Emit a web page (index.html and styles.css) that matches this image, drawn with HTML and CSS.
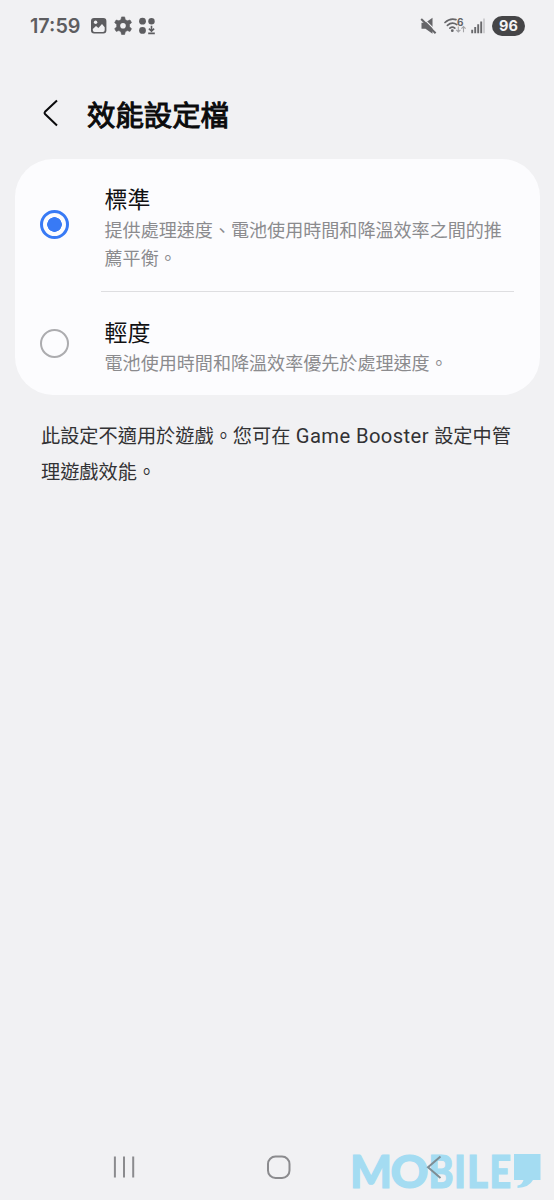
FILE: index.html
```html
<!DOCTYPE html>
<html lang="zh-Hant">
<head>
<meta charset="utf-8">
<title>效能設定檔</title>
<link rel="stylesheet" href="styles.css">
</head>
<body>
<div class="screen">
  <header class="status">
    <span class="clock">17:59</span>
    <svg class="status-left" width="66" height="20" viewBox="0 0 66 20">
      <rect x="1" y="2" width="15.4" height="15.6" rx="3" fill="#5d5d60"/>
      <path d="M2.800 12.900L6 9.900l2.400 2.200 3.600-4.200 2.700 3.300V14q0 1.900-1.800 1.900H4.600q-1.800 0-1.800-1.900z" fill="#f1f1f3"/>
      <circle cx="5.600" cy="6.300" r="1.700" fill="#f1f1f3"/>
      <path d="M31.600 1.600h3l.7 2.800 2 1.100 2.700-.8 1.500 2.600-2 2v2.200l2 2-1.500 2.600-2.700-.8-2 1.100-.7 2.800h-3l-.7-2.800-2-1.100-2.700.8-1.500-2.600 2-2V9.300l-2-2 1.500-2.600 2.700.8 2-1.100z" transform="translate(0 -.7)" fill="#5d5d60" stroke="#5d5d60" stroke-width=".6" stroke-linejoin="round"/>
      <circle cx="33" cy="9.700" r="2.800" fill="#f1f1f3"/>
      <g fill="#5d5d60"><circle cx="52.500" cy="5.200" r="3.400"/><circle cx="61.500" cy="5.200" r="3.200"/><circle cx="52.500" cy="14.400" r="3.400"/></g>
      <path d="M61.500 9.800v5.500M58.900 12.600l2.600 2.600 2.600-2.600M58.200 17.400h6.600" fill="none" stroke="#5d5d60" stroke-width="1.600"/>
    </svg>
    <svg class="status-right" width="66" height="20" viewBox="0 0 66 20">
      <path d="M1.500 6.800h4l7-5v16l-7-5h-4z" fill="#656568"/>
      <path d="M2.300 1.400L16.800 15.800" stroke="#f1f1f3" stroke-width="1.200"/>
      <path d="M1.200 3L15.600 17.200" stroke="#656568" stroke-width="2"/>
      <g fill="none" stroke="#656568" stroke-width="1.700" stroke-linecap="round"><path d="M25 6.500Q30 1.800 36 3.600M27.400 9.400Q32 5.400 36.800 8.600M29.900 12.200Q32.400 10.200 34.800 12.200"/></g>
      <circle cx="32.300" cy="14.700" r="1.400" fill="#656568"/>
      <text x="37" y="9.700" class="wifi-generation">6</text>
      <path d="M38.300 10.500v5.200M36.200 13.800l2.100 2.200 2.100-2.200M43.500 16.300v-5.600M41.400 12.700l2.100-2.200 2.100 2.200" fill="none" stroke="#a5a5a8" stroke-width="1.100"/>
      <path d="M52.200 13.700v3.500M55.200 11v6.200M58.200 8.300v8.900M61.200 5.500v11.700" stroke="#69696c" stroke-width="1.900"/>
      <path d="M64 2.500v14.700" stroke="#c9c9cc" stroke-width="1.700"/>
    </svg>
    <span class="battery">96</span>
  </header>

  <div class="heading">
    <svg width="16" height="28" viewBox="0 0 16 28"><path d="M14 1.500L2 12.800Q1 14 2 15L14 26.500" fill="none" stroke="#0b0b0c" stroke-width="2"/></svg>
    <h1>效能設定檔</h1>
  </div>

  <main class="card">
    <section class="option">
      <span class="radio selected"></span>
      <div class="option-text first">
        <h2>標準</h2>
        <p>提供處理速度、電池使用時間和降溫效率之間的推<br>薦平衡。</p>
      </div>
    </section>
    <section class="option">
      <span class="radio second-radio"></span>
      <div class="option-text">
        <h2>輕度</h2>
        <p>電池使用時間和降溫效率優先於處理速度。</p>
      </div>
    </section>
  </main>

  <p class="note">此設定不適用於遊戲。您可在 <span class="latin">Game Booster</span> 設定中管<br>理遊戲效能。</p>

  <footer class="navigation">
    <svg width="24" height="24" viewBox="0 0 24 24"><path d="M2.900 1.500v21M12 1.500v21M21.200 1.500v21" stroke="#8b8b8e" stroke-width="2"/></svg>
    <svg width="26" height="26" viewBox="0 0 26 26"><rect x="2" y="2.500" width="21.500" height="21.500" rx="7.500" fill="none" stroke="#8b8b8e" stroke-width="2"/></svg>
    <svg class="brand" width="194" height="48" viewBox="0 0 194 48">
      <g class="brand-name">
        <text x="-2" y="39.500" textLength="42" lengthAdjust="spacingAndGlyphs">M</text>
        <text x="38.500" y="39.500" textLength="38" lengthAdjust="spacingAndGlyphs">O</text>
        <text x="76.500" y="39.500" textLength="25" lengthAdjust="spacingAndGlyphs">B</text>
        <text x="102" y="39.500" textLength="12" lengthAdjust="spacingAndGlyphs">I</text>
        <text x="115" y="39.500" textLength="21" lengthAdjust="spacingAndGlyphs">L</text>
        <text x="137.500" y="39.500" textLength="21.500" lengthAdjust="spacingAndGlyphs">E</text>
      </g>
      <path d="M162 6h26.500v26h-7.500q-4 7.500-15.500 8v-2.500q4.500-.5 6-5.500H162z" fill="#a4dcf2"/>
      <path d="M88.500 8.500L76 19.200L88.500 30" fill="none" stroke="#7e8d94" stroke-width="2"/>
    </svg>
  </footer>
</div>
</body>
</html>
```
FILE: styles.css
```css
* { box-sizing: border-box; }
body { margin: 0; background: #f1f1f3; }
h1, h2, p { margin: 0; font-weight: 400; }
svg { display: block; flex: none; overflow: visible; }
.screen {
  width: 554px;
  height: 1200px;
  display: flex;
  flex-direction: column;
  font-family: "Noto Sans CJK TC", sans-serif;
  white-space: nowrap;
}
.status {
  height: 52px;
  padding: 0 29px 0 30px;
  display: flex;
  align-items: center;
  font-family: Inter, sans-serif;
}
.clock { width: 60px; font-size: 19.8px; font-weight: 600; color: #5d5d60; }
.status-right { margin-left: auto; }
.wifi-generation { font: 700 10px Inter, sans-serif; fill: #656568; }
.battery {
  width: 33px;
  height: 20px;
  margin-left: 6px;
  border-radius: 10px;
  background: #454547;
  color: #f4f4f5;
  font-size: 14.5px;
  font-weight: 700;
  line-height: 20px;
  text-align: center;
}
.heading {
  height: 107px;
  padding: 0 0 0 43px;
  display: flex;
  gap: 28px;
  align-items: center;
}
.heading svg { margin-top: 15px; }
.heading h1 {
  margin-top: 17px;
  font-size: 28.4px;
  line-height: 40px;
  color: #0b0b0c;
  -webkit-text-stroke: 1px #0b0b0c;
}
.card {
  width: 525px;
  height: 236px;
  margin-left: 14.5px;
  border-radius: 38px;
  background: #fcfcfe;
}
.option { display: flex; padding-left: 25.5px; }
.radio {
  width: 29px;
  height: 29px;
  flex: none;
  margin: 51px 32px 0 0;
  border: 2px solid #acacaf;
  border-radius: 50%;
}
.radio.selected {
  border: 3px solid #387af5;
  background: radial-gradient(circle, #387af5 0 7px, transparent 7.6px);
}
.second-radio { margin-top: 37px; }
.option-text { width: 413px; padding: 22px 0 0 3.5px; }
.option-text.first { height: 133px; border-bottom: 1px solid #dedee1; }
.option h2 { font-size: 22.9px; line-height: 34px; color: #111113; }
.option p { font-size: 18.07px; line-height: 28px; color: #8b8b8e; }
.note {
  margin: 23px 0 0 41px;
  font-size: 19.2px;
  line-height: 35px;
  color: #323234;
}
.latin { margin: 0 1px; font-family: Roboto, sans-serif; font-size: 20.2px; letter-spacing: .4px; }
.navigation {
  height: 56px;
  margin-top: auto;
  padding: 0 8px 0 112px;
  display: flex;
  align-items: center;
}
.navigation svg { margin-bottom: 10px; }
.navigation svg:nth-child(2) { margin-left: 130px; }
.navigation .brand { margin: 0 0 0 auto; }
.brand-name { font: 900 46px Lato, sans-serif; fill: #a4dcf2; stroke: #a4dcf2; stroke-width: 1.2px; }
```
